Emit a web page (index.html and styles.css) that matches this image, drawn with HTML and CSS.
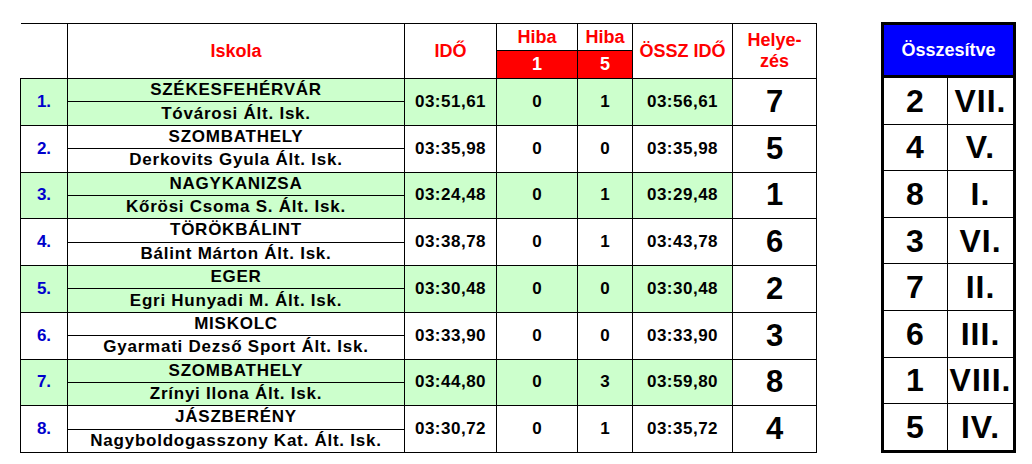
FILE: index.html
```html
<!DOCTYPE html>
<html lang="hu">
<head>
<meta charset="utf-8">
<title>Eredmények</title>
<link rel="stylesheet" href="styles.css">
</head>
<body>
<div class="page">
  <table class="results">
    <colgroup>
      <col class="c-num"><col class="c-school"><col class="c-time"><col class="c-h1"><col class="c-h5"><col class="c-total"><col class="c-place">
    </colgroup>
    <thead>
      <tr class="h-top">
        <th rowspan="2" class="corner"></th>
        <th rowspan="2">Iskola</th>
        <th rowspan="2">IDŐ</th>
        <th class="hiba">Hiba</th>
        <th class="hiba">Hiba</th>
        <th rowspan="2">ÖSSZ IDŐ</th>
        <th rowspan="2" class="helyezes">Helye-<br>zés</th>
      </tr>
      <tr class="h-bot">
        <th class="red">1</th>
        <th class="red">5</th>
      </tr>
    </thead>
    <tbody>
      <tr class="sub green"><td rowspan="2" class="num">1.</td><td class="city">SZÉKESFEHÉRVÁR</td><td rowspan="2" class="time">03:51,61</td><td rowspan="2" class="val">0</td><td rowspan="2" class="val">1</td><td rowspan="2" class="time">03:56,61</td><td rowspan="2" class="place">7</td></tr>
      <tr class="sub green"><td class="school">Tóvárosi Ált. Isk.</td></tr>

      <tr class="sub"><td rowspan="2" class="num">2.</td><td class="city">SZOMBATHELY</td><td rowspan="2" class="time">03:35,98</td><td rowspan="2" class="val">0</td><td rowspan="2" class="val">0</td><td rowspan="2" class="time">03:35,98</td><td rowspan="2" class="place">5</td></tr>
      <tr class="sub"><td class="school">Derkovits Gyula Ált. Isk.</td></tr>

      <tr class="sub green"><td rowspan="2" class="num">3.</td><td class="city">NAGYKANIZSA</td><td rowspan="2" class="time">03:24,48</td><td rowspan="2" class="val">0</td><td rowspan="2" class="val">1</td><td rowspan="2" class="time">03:29,48</td><td rowspan="2" class="place">1</td></tr>
      <tr class="sub green"><td class="school">Kőrösi Csoma S. Ált. Isk.</td></tr>

      <tr class="sub"><td rowspan="2" class="num">4.</td><td class="city">TÖRÖKBÁLINT</td><td rowspan="2" class="time">03:38,78</td><td rowspan="2" class="val">0</td><td rowspan="2" class="val">1</td><td rowspan="2" class="time">03:43,78</td><td rowspan="2" class="place">6</td></tr>
      <tr class="sub"><td class="school">Bálint Márton Ált. Isk.</td></tr>

      <tr class="sub green"><td rowspan="2" class="num">5.</td><td class="city">EGER</td><td rowspan="2" class="time">03:30,48</td><td rowspan="2" class="val">0</td><td rowspan="2" class="val">0</td><td rowspan="2" class="time">03:30,48</td><td rowspan="2" class="place">2</td></tr>
      <tr class="sub green"><td class="school">Egri Hunyadi M. Ált. Isk.</td></tr>

      <tr class="sub"><td rowspan="2" class="num">6.</td><td class="city">MISKOLC</td><td rowspan="2" class="time">03:33,90</td><td rowspan="2" class="val">0</td><td rowspan="2" class="val">0</td><td rowspan="2" class="time">03:33,90</td><td rowspan="2" class="place">3</td></tr>
      <tr class="sub"><td class="school">Gyarmati Dezső Sport Ált. Isk.</td></tr>

      <tr class="sub green"><td rowspan="2" class="num">7.</td><td class="city">SZOMBATHELY</td><td rowspan="2" class="time">03:44,80</td><td rowspan="2" class="val">0</td><td rowspan="2" class="val">3</td><td rowspan="2" class="time">03:59,80</td><td rowspan="2" class="place">8</td></tr>
      <tr class="sub green"><td class="school">Zrínyi Ilona Ált. Isk.</td></tr>

      <tr class="sub"><td rowspan="2" class="num">8.</td><td class="city">JÁSZBERÉNY</td><td rowspan="2" class="time">03:30,72</td><td rowspan="2" class="val">0</td><td rowspan="2" class="val">1</td><td rowspan="2" class="time">03:35,72</td><td rowspan="2" class="place">4</td></tr>
      <tr class="sub"><td class="school">Nagyboldogasszony Kat. Ált. Isk.</td></tr>
    </tbody>
  </table>

  <table class="summary">
    <colgroup><col class="s-pos"><col class="s-rank"></colgroup>
    <thead>
      <tr><th colspan="2">Összesítve</th></tr>
    </thead>
    <tbody>
      <tr><td>2</td><td>VII.</td></tr>
      <tr><td>4</td><td>V.</td></tr>
      <tr><td>8</td><td>I.</td></tr>
      <tr><td>3</td><td>VI.</td></tr>
      <tr><td>7</td><td>II.</td></tr>
      <tr><td>6</td><td>III.</td></tr>
      <tr><td>1</td><td>VIII.</td></tr>
      <tr><td>5</td><td>IV.</td></tr>
    </tbody>
  </table>
</div>
</body>
</html>
```

FILE: styles.css
```css
html, body {
  margin: 0;
  padding: 0;
  background: #ffffff;
}

body {
  font-family: "Liberation Sans", Arial, sans-serif;
  font-weight: bold;
  color: #000;
}

.page {
  display: flex;
  align-items: flex-start;
  padding-left: 20px;
}

/* ---------- main results table ---------- */
.results {
  margin-top: 23px;
  border-collapse: collapse;
  table-layout: fixed;
  width: 797px;
}

.c-num { width: 47px; }
.c-school { width: 337px; }
.c-time { width: 92px; }
.c-h1 { width: 81px; }
.c-h5 { width: 55px; }
.c-total { width: 100px; }
.c-place { width: 84px; }

.results th,
.results td {
  border: 1px solid #000;
  padding: 0;
  text-align: center;
  vertical-align: middle;
  white-space: nowrap;
}

.results th {
  color: #ff0000;
  font-size: 18px;
  line-height: 21px;
}

.results th.corner {
  border-left: none;
}

.h-top { height: 27px; }
.h-bot { height: 28px; }

.results th.red {
  background: #ff0000;
  color: #ffffff;
}

.sub { height: 23.375px; }

.green td { background: #ccffcc; }
.green td.place { background: #ffffff; }

.num {
  color: #0000cc;
  font-size: 17px;
}

.city,
.school {
  font-size: 17px;
  line-height: 20px;
  letter-spacing: 0.75px;
}

.time {
  font-size: 17px;
  letter-spacing: 0.5px;
}

.val {
  font-size: 17px;
}

.place {
  font-size: 31px;
}

/* ---------- summary table ---------- */
.summary {
  margin-left: 64px;
  margin-top: 22px;
  border-collapse: collapse;
  table-layout: fixed;
  border: 3px solid #000;
}

.s-pos { width: 65px; }
.s-rank { width: 67px; }

.summary th {
  background: #0000ff;
  color: #ffffff;
  font-size: 18px;
  height: 50px;
  padding: 0;
  border-bottom: 3px solid #000;
}

.summary td {
  border: 1px solid #000;
  height: 45.6px;
  padding: 0;
  text-align: center;
  vertical-align: middle;
  font-size: 32px;
  line-height: 36px;
  letter-spacing: 1px;
}
```
